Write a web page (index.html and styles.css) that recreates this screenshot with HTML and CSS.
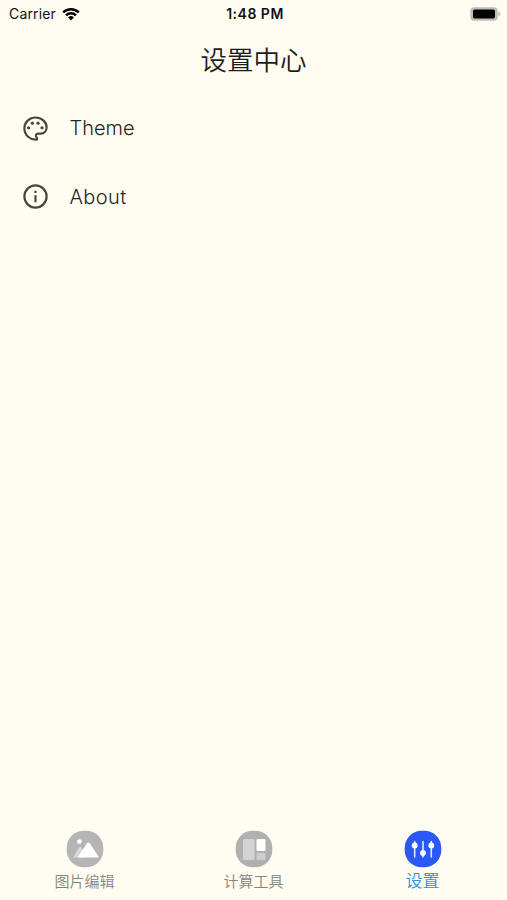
FILE: index.html
```html
<!DOCTYPE html>
<html lang="zh-CN">
<head>
    <meta charset="UTF-8">
    <meta name="viewport" content="width=device-width, initial-scale=1.0">
    <title>设置中心</title>
    <link rel="stylesheet" href="styles.css">
</head>
<body>
    <!-- Status bar -->
    <div class="status-bar">
        <div class="carrier">
            <span>Carrier</span>
            <svg class="wifi" viewBox="0 0 18 14">
                <path d="M0.3 4.5a12.3 12.3 0 0 1 17.4 0l-1.7 1.8a9.9 9.9 0 0 0-14 0z"/>
                <path d="M3.2 7.5a8.2 8.2 0 0 1 11.6 0l-1.7 1.8a5.8 5.8 0 0 0-8.2 0z"/>
                <path d="M6.1 10.5a4.1 4.1 0 0 1 5.8 0L9 13.5z"/>
            </svg>
        </div>
        <span class="time">1:48 PM</span>
        <svg class="battery" viewBox="0 0 31 14">
            <rect x="0.3" y="0.3" width="27.4" height="13.4" rx="4"/>
            <rect class="level" x="3" y="2.6" width="22" height="8.8" rx="1.6"/>
            <path d="M28.4 4.6c2.6 1 2.6 3.8 0 4.8z"/>
        </svg>
    </div>

    <h1 class="title">设置中心</h1>

    <div class="settings">
        <a href="#theme" class="setting">
            <svg class="setting-icon" viewBox="0 0 24 24">
                <path class="outline" d="M13.2 21.1C7.4 21.7 2.8 17.4 2.8 12 2.8 6.8 6.9 2.9 12 2.9s9.2 3.5 9.2 8.2c0 3-2.2 5.2-5 5.2h-2.1c-1.6 0-2.3 1.4-1.4 2.6.6.8.8 1.4.5 2.2z"/>
                <circle cx="6.3" cy="11.4" r="1.35"/>
                <circle cx="9.4" cy="7.6" r="1.35"/>
                <circle cx="14.1" cy="7.6" r="1.35"/>
                <circle cx="17.4" cy="11.4" r="1.35"/>
            </svg>
            <span>Theme</span>
        </a>
        <a href="#about" class="setting about">
            <svg class="setting-icon" viewBox="0 0 24 24">
                <circle class="outline" cx="12" cy="12" r="9.2"/>
                <path d="M11.1 7.2h1.8v1.9h-1.8zm0 3.8h1.8v5.8h-1.8z"/>
            </svg>
            <span>About</span>
        </a>
    </div>

    <!-- Bottom tabs -->
    <div class="tabs">
        <a href="#edit" class="tab">
            <svg class="tab-icon" viewBox="0 0 38 38">
                <rect x="0.7" y="0.7" width="36.6" height="36.6" rx="17" fill="#b5b5b5"/>
                <path d="M7 27.5 13 17.5q1.2-1.5 2.4 0L20 27.5z" fill="#d8d8d8"/>
                <path d="M13 27.5q-1.4 0-.7-1.3L21 13.2q1.3-1.6 2.6 0l8.8 13q.7 1.3-.8 1.3z" fill="#fff"/>
                <circle cx="13.4" cy="11.6" r="2.4" fill="#fff"/>
            </svg>
            <span>图片编辑</span>
        </a>
        <a href="#tools" class="tab">
            <svg class="tab-icon" viewBox="0 0 38 38">
                <rect x="0.7" y="0.7" width="36.6" height="36.6" rx="17" fill="#b0b0b0"/>
                <rect x="8" y="9" width="11.5" height="21" rx="1.5" fill="#d3d3d3"/>
                <rect x="21.5" y="9" width="9" height="12" rx="1.2" fill="#fff"/>
                <rect x="21.5" y="23" width="9" height="7" rx="1.2" fill="#cecece"/>
            </svg>
            <span>计算工具</span>
        </a>
        <a href="#settings" class="tab active">
            <svg class="tab-icon" viewBox="0 0 38 38">
                <rect x="0.7" y="0.7" width="36.6" height="36.6" rx="17" fill="#2b58f7"/>
                <path d="M10.7 11.5V27M19 11.5V27M27.3 11.5V27" stroke="#dfe8ff" stroke-width="1.6" stroke-linecap="round"/>
                <circle cx="10.7" cy="15.4" r="2.9" fill="#fff"/>
                <circle cx="19" cy="23" r="2.9" fill="#fff"/>
                <circle cx="27.3" cy="15.4" r="2.9" fill="#fff"/>
            </svg>
            <span>设置</span>
        </a>
    </div>
</body>
</html>
```
FILE: styles.css
```css
body {
    background-color: #fffdf1;
    margin: 0;
    height: 100vh;
    font-family: 'Inter', 'Noto Sans CJK SC', sans-serif;
    color: #1d1c17;
    display: flex;
    flex-direction: column;
}
a {
    text-decoration: none;
    color: inherit;
}
.status-bar {
    height: 27px;
    padding: 0 6px 0 9px;
    display: grid;
    grid-template-columns: 1fr auto 1fr;
    align-items: center;
    font-size: 14px;
    color: #111;
}
.carrier {
    display: flex;
    align-items: center;
    gap: 6px;
    letter-spacing: 0.15px;
}
.wifi {
    width: 18px;
    height: 14px;
}
.time {
    font-weight: 600;
    letter-spacing: 0.5px;
}
.battery {
    width: 31px;
    height: 14px;
    justify-self: end;
    fill: #bdbcb6;
}
.battery .level {
    fill: #000;
}
.title {
    margin: 0;
    height: 67px;
    line-height: 67px;
    text-align: center;
    font-size: 26.5px;
    font-weight: 350;
}
.settings {
    flex: 1;
}
.setting {
    height: 68.5px;
    padding-left: 20.5px;
    display: flex;
    align-items: center;
    gap: 20px;
    font-size: 20px;
    font-weight: 300;
    color: #26251f;
}
.setting.about {
    letter-spacing: 0.4px;
}
.setting-icon {
    width: 29px;
    height: 29px;
    fill: #48473a;
}
.setting-icon .outline {
    fill: none;
    stroke: #48473a;
    stroke-width: 1.8;
    stroke-linejoin: round;
}
.tabs {
    height: 70px;
    display: flex;
}
.tab {
    flex: 1;
    display: flex;
    flex-direction: column;
    align-items: center;
    font-size: 15px;
    font-weight: 350;
    line-height: 24px;
    color: #85847e;
}
.tab-icon {
    width: 38px;
    height: 38px;
    margin-bottom: 2px;
}
.tab.active {
    font-size: 17px;
    line-height: 22px;
    color: #2196e3;
}
```
